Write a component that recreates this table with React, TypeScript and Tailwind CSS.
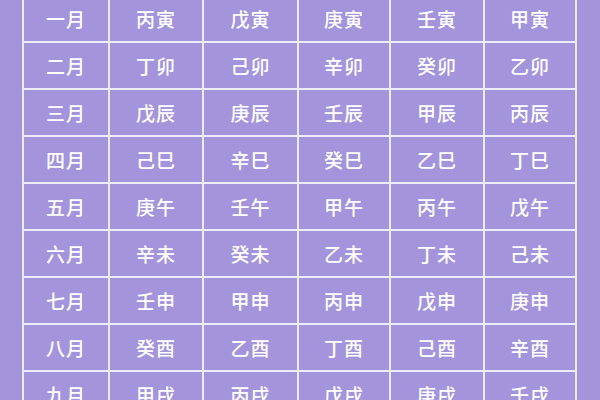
import React from 'react';

const ROWS: string[][] = [
  ['一月', '丙寅', '戊寅', '庚寅', '壬寅', '甲寅'],
  ['二月', '丁卯', '己卯', '辛卯', '癸卯', '乙卯'],
  ['三月', '戊辰', '庚辰', '壬辰', '甲辰', '丙辰'],
  ['四月', '己巳', '辛巳', '癸巳', '乙巳', '丁巳'],
  ['五月', '庚午', '壬午', '甲午', '丙午', '戊午'],
  ['六月', '辛未', '癸未', '乙未', '丁未', '己未'],
  ['七月', '壬申', '甲申', '丙申', '戊申', '庚申'],
  ['八月', '癸酉', '乙酉', '丁酉', '己酉', '辛酉'],
  ['九月', '甲戌', '丙戌', '戊戌', '庚戌', '壬戌'],
];

const App = () => {
  return (
    <div
      className="w-[600px] h-[400px] overflow-hidden bg-[#a394db]"
      style={{ fontFamily: '"Noto Sans CJK SC", "Noto Sans", sans-serif' }}
    >
      {/* grid lines come from the gap showing the light background */}
      <div className="ml-[22px] -mt-[6px] w-[555px] p-[2px] bg-[#eeebf9] grid grid-cols-[84px_92px_93px_90px_92px_90px] auto-rows-[45px] gap-[2px]">
        {ROWS.map((row) =>
          row.map((cell, i) => (
            <div
              key={row[0] + i}
              className="bg-[#a394db] flex items-center justify-center pt-[2px] text-white text-[19px] font-medium tracking-[1px]"
            >
              {cell}
            </div>
          ))
        )}
      </div>
    </div>
  );
};

export default App;
